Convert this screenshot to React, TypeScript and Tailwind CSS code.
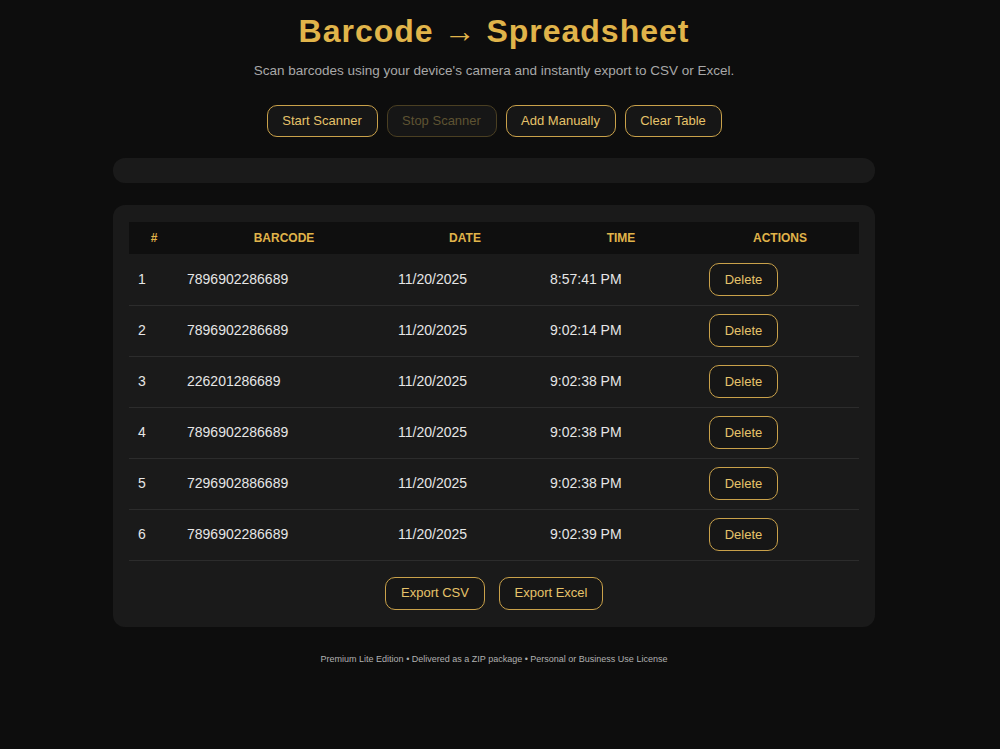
import React from 'react';

const rows = [
  { id: 1, code: '7896902286689', date: '11/20/2025', time: '8:57:41 PM' },
  { id: 2, code: '7896902286689', date: '11/20/2025', time: '9:02:14 PM' },
  { id: 3, code: '226201286689', date: '11/20/2025', time: '9:02:38 PM' },
  { id: 4, code: '7896902286689', date: '11/20/2025', time: '9:02:38 PM' },
  { id: 5, code: '7296902886689', date: '11/20/2025', time: '9:02:38 PM' },
  { id: 6, code: '7896902286689', date: '11/20/2025', time: '9:02:39 PM' },
];

function GoldButton({ children, disabled, className = '' }: { children: React.ReactNode; disabled?: boolean; className?: string }) {
  return (
    <button
      disabled={disabled}
      className={
        'h-[32px] rounded-[10px] border bg-[#161616] text-[13px] ' +
        (disabled ? 'border-[#4a3f22] text-[#5e5332]' : 'border-[#c9a14a] text-[#e6c36a]') +
        ' ' + className
      }
    >
      {children}
    </button>
  );
}

export default function App() {
  return (
    <div className="min-h-[749px] w-full bg-[#0d0d0d] text-[#e6e6e6] font-[family-name:'Liberation_Sans',Arial,sans-serif]">
      <div className="w-[988px]">
        <div className="mx-auto w-[762px] pt-3 flex flex-col items-center">
          <h1 className="text-[32px] leading-[38px] font-bold tracking-[1px] text-[#e0b44a]">Barcode → Spreadsheet</h1>
          <p className="mt-[11px] text-[13.5px] leading-[20px] text-[#a8a8a8]">
            Scan barcodes using your device's camera and instantly export to CSV or Excel.
          </p>

          <div className="mt-[24px] flex gap-[9px]">
            <GoldButton className="w-[111px]">Start Scanner</GoldButton>
            <GoldButton disabled className="w-[110px]">Stop Scanner</GoldButton>
            <GoldButton className="w-[110px]">Add Manually</GoldButton>
            <GoldButton className="w-[97px]">Clear Table</GoldButton>
          </div>

          {/* scanner viewport */}
          <div className="mt-[21px] h-[25px] w-full rounded-[12px] bg-[#1a1a1a]" />

          <div className="mt-[22px] w-full rounded-[12px] bg-[#1a1a1a] px-4 pt-[17px] pb-[17px]">
            <table className="w-full table-fixed border-collapse text-[14px]">
              <colgroup>
                <col className="w-[50px]" />
                <col className="w-[210px]" />
                <col className="w-[152px]" />
                <col className="w-[160px]" />
                <col />
              </colgroup>
              <thead>
                <tr className="bg-[#0f0f0f] h-[32px] text-[12px] font-bold uppercase text-[#e0b44a]">
                  <th className="text-center">#</th>
                  <th className="text-center">Barcode</th>
                  <th className="text-center">Date</th>
                  <th className="text-center">Time</th>
                  <th className="text-center">Actions</th>
                </tr>
              </thead>
              <tbody>
                {rows.map((r) => (
                  <tr key={r.id} className="h-[51px] border-b border-[#2c2c2c]">
                    <td className="px-[9px]">{r.id}</td>
                    <td className="px-2">{r.code}</td>
                    <td className="px-[9px]">{r.date}</td>
                    <td className="px-[9px]">{r.time}</td>
                    <td className="px-2">
                      <GoldButton className="w-[69px] h-[33px]">Delete</GoldButton>
                    </td>
                  </tr>
                ))}
              </tbody>
            </table>

            <div className="mt-[16px] flex justify-center gap-[14px]">
              <GoldButton className="w-[100px] h-[33px]">Export CSV</GoldButton>
              <GoldButton className="w-[104px] h-[33px]">Export Excel</GoldButton>
            </div>
          </div>

          <p className="mt-[26px] text-[9px] leading-[12px] text-[#b0b0b0]">
            Premium Lite Edition • Delivered as a ZIP package • Personal or Business Use License
          </p>
        </div>
      </div>
    </div>
  );
}
